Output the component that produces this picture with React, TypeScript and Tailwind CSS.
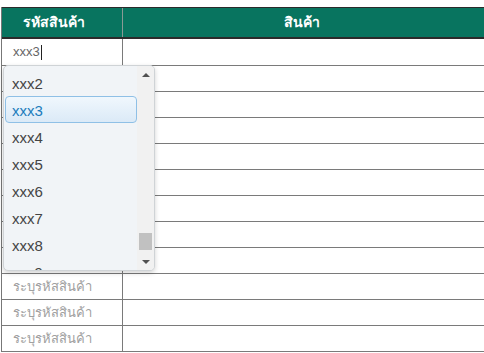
const ROWS = 11
const OPTIONS = ['xxx2', 'xxx3', 'xxx4', 'xxx5', 'xxx6', 'xxx7', 'xxx8', 'xxx9']
const SELECTED = 'xxx3'

export default function App() {
  return (
    <div className="relative h-[353px] w-[484px] overflow-hidden bg-white pt-[7px] font-['Liberation_Sans','Noto_Sans',sans-serif]">
      <div className="ml-px border-l border-[#777]">
        {/* header */}
        <div className="flex h-[32px] border-t border-b-2 border-[#2b2b2b] bg-[#08745f] text-[14px] font-bold text-white">
          <div className="flex w-[121px] items-center justify-center border-r border-[#8a9a95] pr-[17px]">รหัสสินค้า</div>
          <div className="flex flex-1 items-center justify-center pr-[4px]">สินค้า</div>
        </div>

        {/* row being edited */}
        <div className="flex h-[27px] border-b border-[#7a7a7a]">
          <div className="flex w-[121px] items-center border-r border-[#7a7a7a] pl-[11px] text-[13px] text-[#666]">
            xxx3
            <span className="ml-px h-[15px] w-px bg-[#222]" />
          </div>
          <div className="flex-1" />
        </div>

        {Array.from({ length: ROWS }).map((_, i) => (
          <div key={i} className="flex h-[26px] border-b border-[#7a7a7a]">
            <div className="flex w-[121px] items-center border-r border-[#7a7a7a] pl-[11px] text-[13px] text-[#a0a0a0]">
              ระบุรหัสสินค้า
            </div>
            <div className="flex-1" />
          </div>
        ))}
      </div>

      {/* autocomplete dropdown */}
      <div className="absolute left-[3px] top-[65px] flex h-[206px] w-[152px] overflow-hidden rounded-[5px] border border-[#cfd3d6] bg-[#f1f4f7] shadow-[0_2px_5px_rgba(0,0,0,0.18)]">
        <div className="flex-1 overflow-hidden pl-px pt-[3px]">
          {OPTIONS.map(o => (
            <div
              key={o}
              className={
                o === SELECTED
                  ? 'flex h-[27px] items-center rounded-[4px] border border-[#8fc0e6] bg-gradient-to-b from-[#f0f7fd] to-[#dbeaf7] pl-[6px] pt-[3px] text-[15px] text-[#1c7cbc]'
                  : 'flex h-[27px] items-center border border-transparent pl-[6px] pt-[3px] text-[15px] text-[#444]'
              }
            >
              {o}
            </div>
          ))}
        </div>
        <div className="flex w-[17px] flex-col bg-[#f1f1f1]">
          <div className="flex h-[17px] items-center justify-center">
            <span className="h-0 w-0 border-x-[4px] border-b-[4px] border-x-transparent border-b-[#505050]" />
          </div>
          <div className="flex flex-1 flex-col justify-end pb-[3px] pl-[2px] pr-[2px]">
            <div className="h-[17px] w-full bg-[#c1c1c1]" />
          </div>
          <div className="flex h-[17px] items-center justify-center">
            <span className="h-0 w-0 border-x-[4px] border-t-[4px] border-x-transparent border-t-[#505050]" />
          </div>
        </div>
      </div>
    </div>
  )
}
